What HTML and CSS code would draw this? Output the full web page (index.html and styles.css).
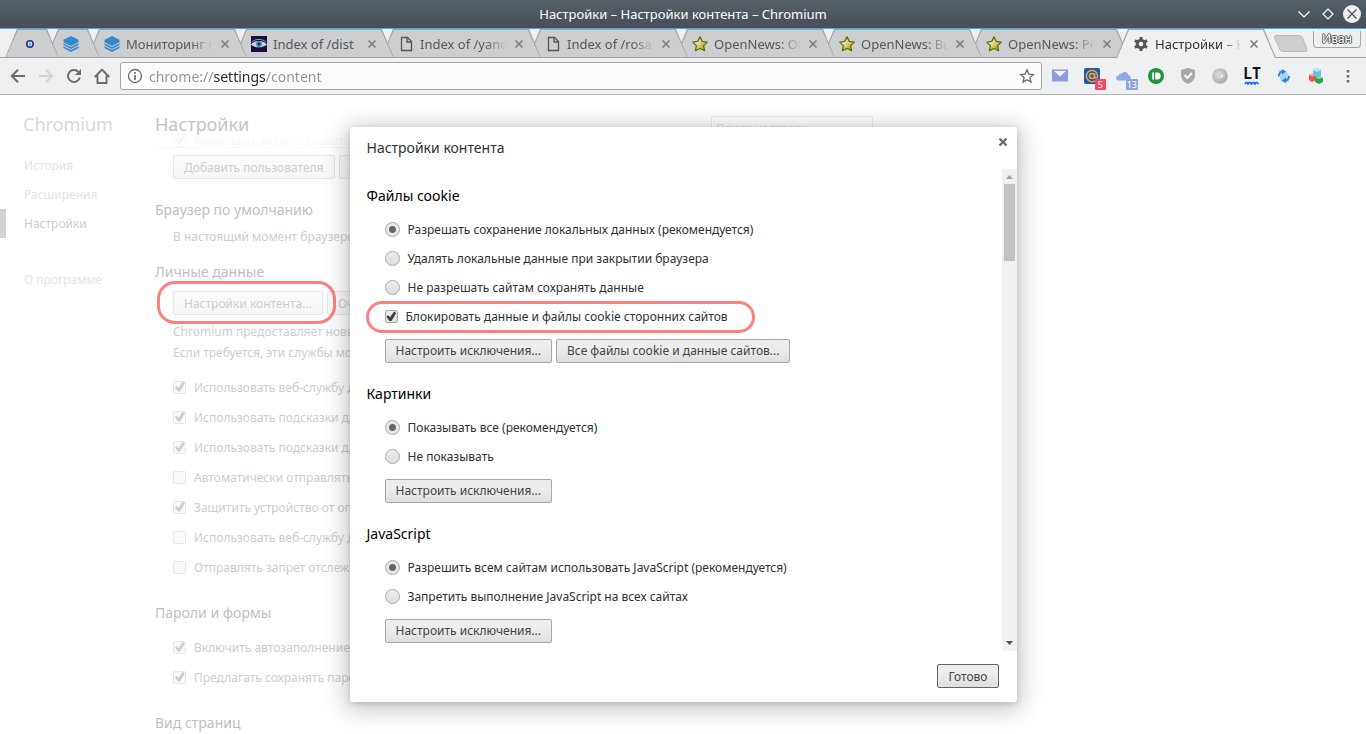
FILE: index.html
```html
<!DOCTYPE html>
<html lang="ru">
<head>
<meta charset="UTF-8">
<meta name="viewport" content="width=device-width, initial-scale=1.0">
<title>Настройки – Настройки контента – Chromium</title>
<link rel="stylesheet" href="styles.css">
</head>
<body>

<!-- shared icons -->
<svg class="defs" aria-hidden="true">
  <defs>
    <linearGradient id="gold" x1="0" y1="0" x2="1" y2="1">
      <stop offset="0.2" stop-color="#fdfdf0"/>
      <stop offset="0.8" stop-color="#a8a820"/>
    </linearGradient>
    <radialGradient id="ball" cx="0.4" cy="0.4" r="0.6">
      <stop offset="0" stop-color="#dedede"/>
      <stop offset="1" stop-color="#a9a9a9"/>
    </radialGradient>
    <symbol id="layers" viewBox="0 0 16 16">
      <path d="M8 0l7.500 3.800v2.400L8 10 .5 6.200V3.800z" fill="#3588ca"/>
      <path d="M.5 7.300L8 11l7.500-3.700v1.800L8 12.900.5 9.100zM.5 10.200L8 13.900l7.500-3.700V12L8 16 .5 12z" fill="#3588ca"/>
    </symbol>
    <symbol id="page" viewBox="0 0 16 16">
      <path d="M3.500 1.500h6l4 4v9h-10z" fill="none" stroke="#555" stroke-width="1.300"/>
      <path d="M9 1.500V6h4.500" fill="none" stroke="#555" stroke-width="1.300"/>
    </symbol>
    <symbol id="star" viewBox="0 0 16 16">
      <path d="M8 .9l2.200 4.500 5 .7-3.600 3.500 1 5L8 12.500 3.400 14.600l1-5L.8 6.100l5-.7z" fill="url(#gold)" stroke="#6b6b00" stroke-width="1.300" stroke-linejoin="round"/>
    </symbol>
    <symbol id="cross" viewBox="0 0 10 10">
      <path d="M1.500 1.500l7 7M8.500 1.500l-7 7" stroke="#7c7c7e" stroke-width="1.600"/>
    </symbol>
  </defs>
</svg>

<div class="window">
  <header class="titlebar">
    <span class="window-title">Настройки – Настройки контента – Chromium</span>
    <div class="window-buttons">
      <button aria-label="Свернуть"><svg width="18" height="18"><path d="M3.500 6.500L9 12l5.500-5.500" fill="none" stroke="#fcfcfc" stroke-width="1.200"/></svg></button>
      <button aria-label="Развернуть"><svg width="18" height="18"><path d="M9 4l5 5-5 5-5-5z" fill="none" stroke="#fcfcfc" stroke-width="1.200"/></svg></button>
      <button aria-label="Закрыть"><svg width="18" height="18"><circle cx="9" cy="9" r="9" fill="#eff0f1"/><path d="M4.500 4.500l9 9M13.500 4.500l-9 9" stroke="#475057" stroke-width="1.200"/></svg></button>
    </div>
  </header>

  <div class="tabstrip">
    <div class="tab pinned">
      <a href="#" aria-label="Закреплённая вкладка"><svg width="16" height="16"><circle cx="8" cy="8" r="3.200" fill="#d5efff" stroke="#25347a" stroke-width="1.600"/><path d="M7 6.500h2v3H7z" fill="#5bb2ee"/></svg></a>
    </div>
    <div class="tab pinned">
      <a href="#" aria-label="Мониторинг"><svg width="16" height="16"><use href="#layers"/></svg></a>
    </div>
    <div class="tab">
      <a href="#"><svg width="16" height="16"><use href="#layers"/></svg><span class="tab-title">Мониторинг п</span></a>
      <button aria-label="Закрыть вкладку"><svg width="10" height="10"><use href="#cross"/></svg></button>
    </div>
    <div class="tab">
      <a href="#"><svg width="16" height="16"><path d="M0 0h16v16H0z" fill="#260b42"/><path d="M0 8.500C3 4 12 3.500 16 8.500 12 12 4 12.500 0 8.500z" fill="#b9dbe0"/><path d="M1 6C5 2.500 11 2.500 15 6" fill="none" stroke="#77a7b4"/><circle cx="8" cy="8" r="3" fill="#4a93aa"/><circle cx="8" cy="8" r="1.300" fill="#122746"/></svg><span class="tab-title short">Index of /dist</span></a>
      <button aria-label="Закрыть вкладку"><svg width="10" height="10"><use href="#cross"/></svg></button>
    </div>
    <div class="tab">
      <a href="#"><svg width="16" height="16"><use href="#page"/></svg><span class="tab-title">Index of /yand</span></a>
      <button aria-label="Закрыть вкладку"><svg width="10" height="10"><use href="#cross"/></svg></button>
    </div>
    <div class="tab">
      <a href="#"><svg width="16" height="16"><use href="#page"/></svg><span class="tab-title">Index of /rosa2</span></a>
      <button aria-label="Закрыть вкладку"><svg width="10" height="10"><use href="#cross"/></svg></button>
    </div>
    <div class="tab">
      <a href="#"><svg width="16" height="16"><use href="#star"/></svg><span class="tab-title">OpenNews: Об</span></a>
      <button aria-label="Закрыть вкладку"><svg width="10" height="10"><use href="#cross"/></svg></button>
    </div>
    <div class="tab">
      <a href="#"><svg width="16" height="16"><use href="#star"/></svg><span class="tab-title">OpenNews: Вы</span></a>
      <button aria-label="Закрыть вкладку"><svg width="10" height="10"><use href="#cross"/></svg></button>
    </div>
    <div class="tab">
      <a href="#"><svg width="16" height="16"><use href="#star"/></svg><span class="tab-title">OpenNews: Рел</span></a>
      <button aria-label="Закрыть вкладку"><svg width="10" height="10"><use href="#cross"/></svg></button>
    </div>
    <div class="tab active">
      <a href="#"><svg width="16" height="16" viewBox="0 0 16 16"><circle cx="8" cy="8" r="3.800" fill="none" stroke="#555" stroke-width="3"/><path d="M8 1v3M8 12v3M1.900 4.500l2.600 1.500M11.500 10l2.600 1.500M1.900 11.500L4.500 10M11.500 6l2.600-1.500" stroke="#555" stroke-width="3"/></svg><span class="tab-title">Настройки – На</span></a>
      <button aria-label="Закрыть вкладку"><svg width="10" height="10"><use href="#cross"/></svg></button>
    </div>
    <button class="new-tab" aria-label="Новая вкладка"><svg width="36" height="18"><path d="M2.500.5h24q2 0 3 2l4.500 12q.5 2-1.500 2H10q-2 0-3-2L1.500 2.500q-.5-2 1-2z" fill="#cdcecf" stroke="#b7b8b9"/></svg></button>
    <button class="profile">Иван</button>
  </div>

  <div class="toolbar">
    <button class="nav-btn" aria-label="Назад"><svg width="16" height="16"><path d="M15 8H2.500M8 1.800L1.800 8 8 14.200" fill="none" stroke="#6b6b6d" stroke-width="2"/></svg></button>
    <button class="nav-btn" aria-label="Вперёд" disabled><svg width="16" height="16"><path d="M1 8h12.500M8 1.800L14.200 8 8 14.200" fill="none" stroke="#d3d4d6" stroke-width="2"/></svg></button>
    <button class="nav-btn" aria-label="Обновить"><svg width="16" height="16"><path d="M13.800 9.500A6 6 0 1 1 12.300 3.800" fill="none" stroke="#6b6b6d" stroke-width="2"/><path d="M15 1v6H9z" fill="#6b6b6d"/></svg></button>
    <button class="nav-btn" aria-label="Домой"><svg width="16" height="16"><path d="M.8 9L8 1.700 15.200 9M3.500 7.500V15h9V7.500" fill="none" stroke="#6b6b6d" stroke-width="1.900"/></svg></button>

    <div class="omnibox">
      <svg width="16" height="16"><circle cx="8" cy="8" r="6.500" fill="none" stroke="#6b6b6d" stroke-width="1.300"/><path d="M8 7v5M8 4v1.800" stroke="#6b6b6d" stroke-width="1.700"/></svg>
      <input type="text" class="url" aria-label="Адрес" value="chrome://settings/content">
      <button aria-label="Добавить в закладки"><svg width="16" height="16"><path d="M8 1.800l1.800 4.300 4.700.4-3.600 3.100 1.100 4.500L8 11.700l-4 2.400 1.100-4.500L1.500 6.500l4.700-.4z" fill="none" stroke="#6b6b6d" stroke-width="1.300"/></svg></button>
    </div>

    <div class="extensions">
      <button aria-label="Почта"><svg width="16" height="16"><path d="M0 1.500h16v12H0z" fill="#8c9fdb"/><path d="M2 3h12L8 8.500z" fill="#f4f6fd"/></svg></button>
      <button aria-label="Mail.Ru, 5"><svg width="16" height="16"><rect width="16" height="16" rx="2" fill="#1a5ab5"/><circle cx="8" cy="8" r="2.500" fill="none" stroke="#f7a32c" stroke-width="1.500"/><path d="M10.600 5.500v3.500c.5 1.800 3 1.500 3-1A5.600 5.600 0 1 0 11 12.800" fill="none" stroke="#f7a32c" stroke-width="1.500"/></svg><span class="badge red">5</span></button>
      <button aria-label="Погода, 13"><svg width="16" height="16"><path d="M2.500 12.500a2.500 2.500 0 0 1 0-5 3 3 0 0 1 3-2 4 4 0 0 1 7 1.500 3 3 0 0 1 1 5.500z" fill="#93a9e6"/></svg><span class="badge blue">13</span></button>
      <button aria-label="Pushbullet"><svg width="16" height="16"><circle cx="8" cy="8" r="8" fill="#26943f"/><path d="M4.200 4.500h1.900v7H4.200zM7.200 4.500h2a3.500 3.500 0 0 1 0 7h-2z" fill="#fff"/></svg></button>
      <button aria-label="Защита"><svg width="16" height="16"><path d="M8 0l7 2v5c0 4-3 7.500-7 9-4-1.500-7-5-7-9V2z" fill="#a7a7a7"/><path d="M4.500 7L7.500 10 12 5" fill="none" stroke="#fff" stroke-width="2"/></svg></button>
      <button aria-label="Шар"><svg width="16" height="16"><circle cx="8" cy="8" r="7.800" fill="url(#ball)"/><circle cx="8" cy="7" r="3" fill="none" stroke="#d8d8d8"/><circle cx="10" cy="8" r="1.300" fill="#eee"/></svg></button>
      <button class="lt" aria-label="LanguageTool"><b>LT</b><svg width="16" height="4"><path d="M1 3q1.500-3 3 0 1.500-3 3.500 0 1.500-3 3.500 0 1.500-3 3.500 0" fill="none" stroke="#1477f8" stroke-width="1.800"/></svg></button>
      <button aria-label="Синхронизация"><svg width="16" height="16"><path d="M2.500 2h6l4.500 4.500V14h-8z" fill="#a9d3f3"/><path d="M3 8.500a4 4 0 0 1 4-5M13 8a4 4 0 0 1-4 4.500" fill="none" stroke="#2b82cf" stroke-width="1.800"/><path d="M6 1l4 2.500-4 3zM10 9.500L6 12.500l4 3z" fill="#2b82cf"/></svg></button>
      <button aria-label="Кубики"><svg width="16" height="16"><path d="M5 2l4-2 4 2v6L9 10 5 8z" fill="#5fc4ee"/><path d="M5 2l4 2 4-2-4-2z" fill="#b6e7fb"/><path d="M1 7l4-1 3 2v4l-4 2-3-2z" fill="#e9504f"/><path d="M1 7l3 1.500L8 8 5 6z" fill="#f5a09c"/><path d="M7 9l4-1 4 2v4l-4 2-4-2z" fill="#26a653"/><path d="M7 9l4 2 4-1-4-2z" fill="#82dd9c"/></svg></button>
      <button aria-label="Меню"><svg width="16" height="16"><path d="M6.700 2h2.600v2.600H6.700zM6.700 7h2.600v2.600H6.700zM6.700 12h2.600v2.600H6.700z" fill="#6b6b6d"/></svg></button>
    </div>
  </div>

  <div class="content">
    <nav class="sidebar">
      <h1>Chromium</h1>
      <a href="#">История</a>
      <a href="#">Расширения</a>
      <a href="#" class="selected">Настройки</a>
      <a href="#" class="about">О программе</a>
    </nav>

    <main class="settings">
      <div class="page-header">
        <h1>Настройки</h1>
        <input type="search" placeholder="Поиск настроек" aria-label="Поиск настроек">
      </div>

      <label class="check under-header"><input type="checkbox" checked>Разрешить всем создавать</label>
      <div class="buttons">
        <button>Добавить пользователя</button>
        <button>Импорт</button>
      </div>

      <h3>Браузер по умолчанию</h3>
      <p>В настоящий момент браузером</p>

      <h3>Личные данные</h3>
      <div class="buttons">
        <span class="marked"><button>Настройки контента...</button></span>
        <button>Очистить</button>
      </div>
      <div class="notes">
        <p>Chromium предоставляет новые</p>
        <p>Если требуется, эти службы можно</p>
      </div>
      <div class="checks">
        <label class="check"><input type="checkbox" checked>Использовать веб-службу для</label>
        <label class="check"><input type="checkbox" checked>Использовать подсказки для</label>
        <label class="check"><input type="checkbox" checked>Использовать подсказки для</label>
        <label class="check"><input type="checkbox">Автоматически отправлять</label>
        <label class="check"><input type="checkbox" checked>Защитить устройство от опасных</label>
        <label class="check"><input type="checkbox">Использовать веб-службу для</label>
        <label class="check"><input type="checkbox">Отправлять запрет отслеживания</label>
      </div>

      <h3>Пароли и формы</h3>
      <div class="checks">
        <label class="check"><input type="checkbox" checked>Включить автозаполнение форм</label>
        <label class="check"><input type="checkbox" checked>Предлагать сохранять пароли</label>
      </div>

      <h3>Вид страниц</h3>
    </main>

    <div class="overlay">
      <section class="dialog" role="dialog" aria-labelledby="dialog-title">
        <div class="dialog-header">
          <h2 id="dialog-title">Настройки контента</h2>
          <button class="dialog-close" aria-label="Закрыть"><svg width="10" height="10"><path d="M1.500 1.500l7 7M8.500 1.500l-7 7" stroke="#6c6c6c" stroke-width="2.400"/></svg></button>
        </div>

        <div class="dialog-body">
          <div class="dialog-scroll">
            <h3>Файлы cookie</h3>
            <div class="group">
              <label><input type="radio" name="cookies" checked>Разрешать сохранение локальных данных (рекомендуется)</label>
              <label><input type="radio" name="cookies">Удалять локальные данные при закрытии браузера</label>
              <label><input type="radio" name="cookies">Не разрешать сайтам сохранять данные</label>
              <label class="marked"><input type="checkbox" checked>Блокировать данные и файлы cookie сторонних сайтов</label>
              <div class="group-buttons">
                <button>Настроить исключения...</button>
                <button>Все файлы cookie и данные сайтов...</button>
              </div>
            </div>

            <h3>Картинки</h3>
            <div class="group">
              <label><input type="radio" name="images" checked>Показывать все (рекомендуется)</label>
              <label><input type="radio" name="images">Не показывать</label>
              <div class="group-buttons">
                <button>Настроить исключения...</button>
              </div>
            </div>

            <h3>JavaScript</h3>
            <div class="group">
              <label><input type="radio" name="js" checked>Разрешить всем сайтам использовать JavaScript (рекомендуется)</label>
              <label><input type="radio" name="js">Запретить выполнение JavaScript на всех сайтах</label>
              <div class="group-buttons">
                <button>Настроить исключения...</button>
              </div>
            </div>
          </div>
          <div class="scrollbar" aria-hidden="true">
            <svg width="15" height="15"><path d="M4 10h7L7.500 6z" fill="#a3a3a3"/></svg>
            <div class="thumb"></div>
            <svg width="15" height="15"><path d="M4 5h7L7.500 9z" fill="#505050"/></svg>
          </div>
        </div>

        <div class="dialog-footer">
          <button class="done">Готово</button>
        </div>
      </section>
    </div>
  </div>
</div>

</body>
</html>
```

FILE: styles.css
```css
* {
  box-sizing: border-box;
}

body {
  margin: 0;
  font-family: "Noto Sans", sans-serif;
  font-size: 12px;
  color: #303942;
  background-color: #fff;
}

button,
input {
  font: inherit;
  color: inherit;
  margin: 0;
}

h1, h2, h3, p {
  margin: 0;
  font-weight: normal;
}

a {
  color: inherit;
  text-decoration: none;
}

svg {
  display: block;
  flex: none;
}

.defs {
  position: absolute;
  width: 0;
  height: 0;
}

.window {
  display: flex;
  flex-direction: column;
  height: 100vh;
  overflow: hidden;
}

/* window title */
.titlebar {
  display: grid;
  grid-template-columns: 1fr auto 1fr;
  align-items: center;
  height: 28px;
  flex: none;
  padding: 0 5px;
  background: linear-gradient(#566069, #464f57);
  color: #fcfcfc;
}

.window-title {
  grid-column: 2;
  font-size: 13px;
}

.window-buttons {
  display: flex;
  justify-content: flex-end;
  gap: 6px;
}

.window-buttons button,
.tab button,
.new-tab,
.nav-btn,
.omnibox button,
.extensions button,
.dialog-close {
  display: flex;
  align-items: center;
  justify-content: center;
  padding: 0;
  border: none;
  background: none;
}

/* tabs */
.tabstrip {
  display: flex;
  height: 30px;
  flex: none;
  padding: 0 5px;
  border-top: 1px solid #3daee9;
  background: linear-gradient(#eff0f2 28px, #a4a4a6 28px);
}

.tab {
  position: relative;
  display: flex;
  align-items: center;
  gap: 7px;
  width: 160px;
  min-width: 0;
  height: 29px;
  margin-right: -13px;
  padding: 0 17px;
  color: #55585b;
}

.tab.pinned {
  width: 54px;
}

.tab::before,
.tab::after {
  content: "";
  position: absolute;
  inset: 0;
  background-color: #a0a0a2;
  clip-path: polygon(0 100%, 12px 0, calc(100% - 12px) 0, 100% 100%);
}

.tab::after {
  inset: 1px;
  background-color: #cdcecf;
}

.tab:nth-child(1) { z-index: 9; }
.tab:nth-child(2) { z-index: 8; }
.tab:nth-child(3) { z-index: 7; }
.tab:nth-child(4) { z-index: 6; }
.tab:nth-child(5) { z-index: 5; }
.tab:nth-child(6) { z-index: 4; }
.tab:nth-child(7) { z-index: 3; }
.tab:nth-child(8) { z-index: 2; }
.tab:nth-child(9) { z-index: 1; }

.tab.active {
  z-index: 10;
  color: #303234;
}

.tab.active::after {
  bottom: 0;
  background-color: #eff0f2;
}

.tab a {
  position: relative;
  z-index: 1;
  display: flex;
  align-items: center;
  gap: 6px;
  flex: 1;
  min-width: 0;
}

.tab.pinned a {
  flex: none;
}

.tab button {
  position: relative;
  z-index: 1;
}

.tab-title {
  flex: 1;
  overflow: hidden;
  white-space: nowrap;
  font-size: 13px;
  -webkit-mask-image: linear-gradient(to right, #000 calc(100% - 22px), transparent);
  mask-image: linear-gradient(to right, #000 calc(100% - 22px), transparent);
}

.tab-title.short {
  -webkit-mask-image: none;
  mask-image: none;
}

.new-tab {
  align-self: center;
  margin-left: 10px;
}

.profile {
  align-self: flex-start;
  height: 17px;
  margin: 2px 0 0 auto;
  padding: 0 8px;
  border: 1px solid #a4a4a6;
  border-top: none;
  border-radius: 0 0 4px 4px;
  background-color: #eff0f2;
  color: #fff;
  line-height: 16px;
  text-shadow: 1px 0 #555, -1px 0 #555, 0 1px #555, 0 -1px #555;
}

/* toolbar */
.toolbar {
  display: flex;
  align-items: center;
  height: 37px;
  flex: none;
  padding: 0 2px 0 4px;
  border-bottom: 1px solid #b6b4b6;
  background-color: #eff0f2;
}

.nav-btn {
  width: 28px;
  height: 28px;
}

.omnibox {
  display: flex;
  align-items: center;
  flex: 1;
  gap: 6px;
  height: 28px;
  margin: 0 2px 0 4px;
  padding: 0 6px;
  border: 1px solid #a6a6a8;
  border-radius: 3px;
  background-color: #fcfcfc;
}

.url {
  flex: 1;
  min-width: 0;
  padding: 0;
  border: none;
  outline: none;
  font-size: 14px;
  background: linear-gradient(to right, #8f9296 64px, #232629 64px, #232629 117px, #8f9296 117px);
  -webkit-background-clip: text;
  background-clip: text;
  -webkit-text-fill-color: transparent;
}

.extensions {
  display: flex;
}

.extensions button {
  position: relative;
  width: 32px;
  height: 28px;
}

.extensions .lt {
  flex-direction: column;
}

.lt b {
  color: #111;
  font-family: "DejaVu Sans Mono", monospace;
  font-size: 15px;
  line-height: 14px;
}

.badge {
  position: absolute;
  right: 2px;
  bottom: 0;
  padding: 0 3px;
  border-radius: 1px;
  color: #fff;
  font-size: 9px;
  line-height: 11px;
}

.badge.red {
  background-color: #f8495f;
}

.badge.blue {
  padding: 0 1px;
  background-color: #8ea4de;
}

/* settings page behind the dialog */
.content {
  position: relative;
  display: flex;
  flex: 1;
  min-height: 0;
  overflow: hidden;
  color: #cbcdd0;
}

.sidebar {
  display: flex;
  flex-direction: column;
  flex: none;
  width: 155px;
  padding-top: 17px;
}

.sidebar h1 {
  height: 39px;
  padding-left: 23px;
  font-size: 18px;
  line-height: 24px;
  color: #d6d7da;
}

.sidebar a {
  padding-left: 18px;
  border-left: 6px solid transparent;
  line-height: 29px;
  color: #e2e2e4;
}

.sidebar .selected {
  border-left-color: #d2d3d7;
  color: #cbcdd0;
}

.sidebar .about {
  margin-top: 27px;
}

.settings {
  position: relative;
  flex: 1;
  max-width: 718px;
  padding-top: 33px;
  white-space: nowrap;
}

.page-header {
  position: absolute;
  top: 0;
  left: 0;
  right: 0;
  display: flex;
  justify-content: space-between;
  height: 53px;
  padding-top: 17px;
  border-bottom: 1px solid #f7f7f7;
}

.page-header h1 {
  font-size: 18px;
  line-height: 24px;
  color: #c3c4c6;
}

.page-header input {
  width: 162px;
  height: 24px;
  margin-top: 4px;
  padding: 0 4px;
  border: 1px solid #e9e9e9;
  border-radius: 2px;
  background: none;
}

.page-header input::placeholder {
  color: #dedede;
}

.settings h3 {
  padding: 14px 0 5px;
  font-size: 14px;
  line-height: 22px;
  color: #bfbfc0;
}

.settings p {
  padding-left: 18px;
  line-height: 21px;
}

.notes {
  margin-bottom: 6px;
}

.buttons {
  display: flex;
  gap: 4px;
  padding: 3px 0 6px 18px;
}

.buttons button {
  height: 24px;
  padding: 0 10px;
  border: 1px solid #e6e6e6;
  border-radius: 2px;
  background: linear-gradient(#fbfbfb, #f7f7f7);
  color: #cbcdd0;
}

.checks {
  padding: 3px 0 6px;
}

.check {
  display: flex;
  align-items: center;
  gap: 8px;
  height: 30px;
  padding-left: 18px;
}

.check.under-header {
  height: 24px;
  color: #f8f8f9;
}

.check.under-header input {
  opacity: 0.2;
}

input[type="checkbox"],
input[type="radio"] {
  appearance: none;
  flex: none;
  width: 13px;
  height: 13px;
  border: 1px solid #a9a9a9;
  border-radius: 2px;
  background: linear-gradient(#ededed, #dedede);
}

input[type="radio"] {
  width: 15px;
  height: 15px;
  border-radius: 50%;
}

input[type="radio"]:checked {
  background: radial-gradient(circle, #666 3px, #e6e6e6 4px);
}

input[type="checkbox"]:checked::before {
  content: "";
  display: block;
  width: 11px;
  height: 11px;
  background-color: #3c3c3c;
  clip-path: polygon(8% 52%, 24% 38%, 42% 58%, 78% 4%, 98% 18%, 54% 92%, 36% 92%);
}

.check input[type="checkbox"] {
  border-color: #e6e6e6;
  background: #f9f9f9;
}

.check input[type="checkbox"]:checked::before {
  background-color: #cdcdcd;
}

/* red outline round the important controls */
.marked {
  position: relative;
}

.marked::after {
  content: "";
  position: absolute;
  inset: -10px -13px -9px -16px;
  border: 3px solid #fb8080;
  border-radius: 18px;
  pointer-events: none;
}

/* dialog */
.overlay {
  position: absolute;
  inset: 0;
  display: flex;
  align-items: center;
  justify-content: center;
}

.dialog {
  display: flex;
  flex-direction: column;
  width: 667px;
  max-width: 95%;
  height: 90%;
  border-radius: 3px;
  background-color: #fff;
  box-shadow: 0 4px 23px 5px rgba(0, 0, 0, 0.2), 0 2px 6px rgba(0, 0, 0, 0.15);
  color: #303030;
}

.dialog-header {
  display: flex;
  align-items: flex-start;
  justify-content: space-between;
  height: 42px;
  flex: none;
  padding: 10px 9px 0 17px;
}

.dialog-header h2 {
  font-size: 14px;
  line-height: 22px;
}

.dialog-close {
  height: 10px;
}

.dialog-body {
  display: flex;
  flex: 1;
  min-height: 0;
}

.dialog-scroll {
  flex: 1;
  padding: 16px 17px 0;
  overflow: hidden;
}

.dialog-scroll h3 {
  margin-bottom: 8px;
  font-size: 14px;
  line-height: 22px;
  color: #000;
}

.group {
  display: flex;
  flex-direction: column;
  align-items: flex-start;
  margin-bottom: 20px;
  padding-left: 18px;
}

.group label {
  display: flex;
  align-items: center;
  gap: 8px;
  height: 29px;
}

.group .marked::after {
  inset: -1px -27px -2px -19px;
}

.group-buttons {
  display: flex;
  gap: 4px;
  margin-top: 8px;
}

.group-buttons button,
.done {
  height: 24px;
  padding: 0 10px;
  border: 1px solid #a8a8a8;
  border-radius: 2px;
  background: linear-gradient(#ededed 38%, #dedede);
  color: #444;
}

.scrollbar {
  display: flex;
  flex-direction: column;
  width: 15px;
  background-color: #f1f1f1;
}

.thumb {
  height: 77px;
  margin: 0 2px auto;
  background-color: #c1c1c1;
}

.dialog-footer {
  display: flex;
  justify-content: flex-end;
  flex: none;
  padding: 13px 18px 14px;
}

.done {
  border-color: #666;
}
```
